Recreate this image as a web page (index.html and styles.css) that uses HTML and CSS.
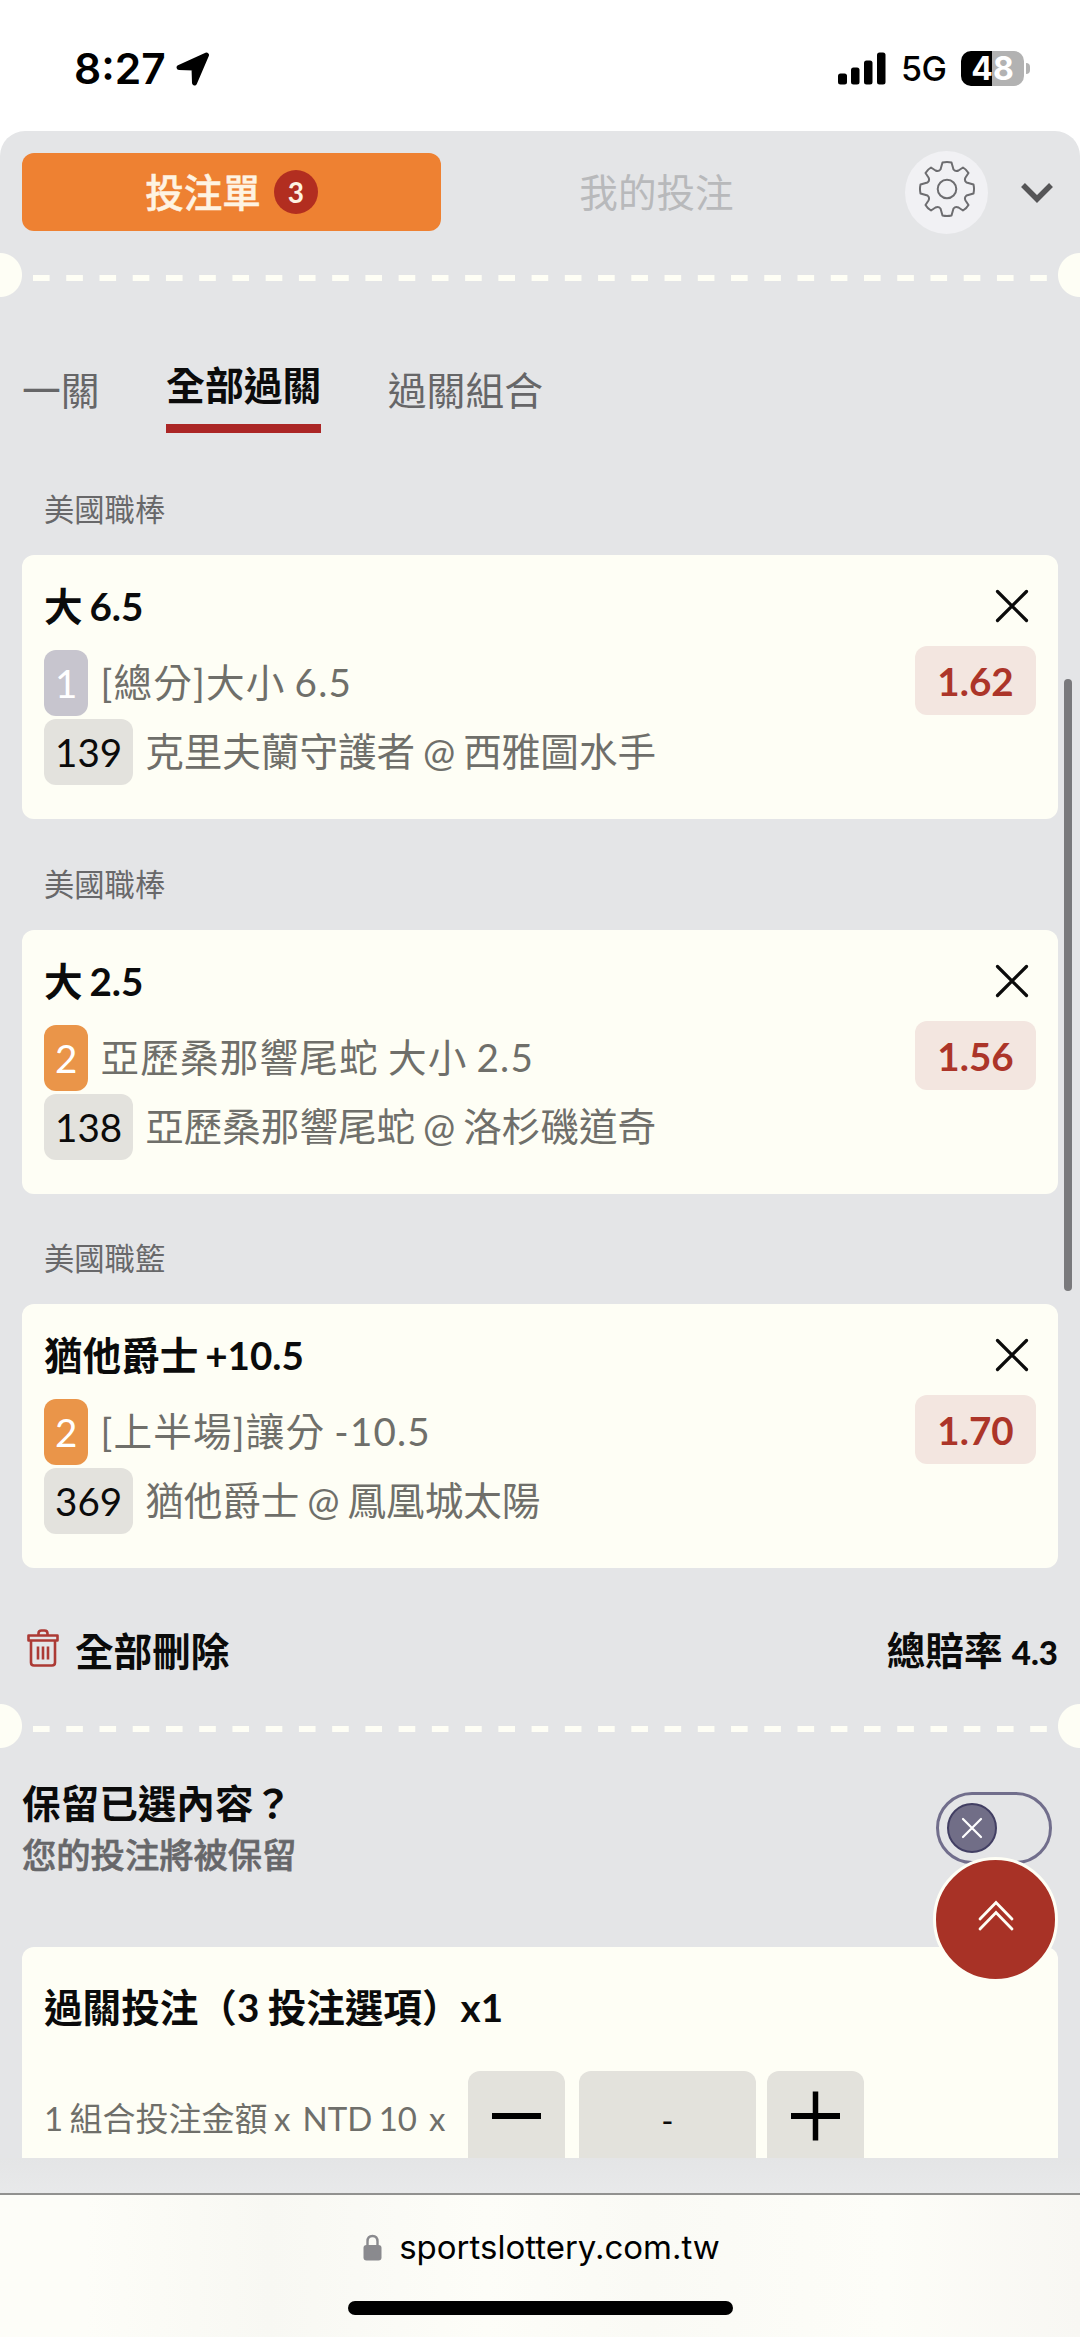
FILE: index.html
```html
<!DOCTYPE html>
<html lang="zh-Hant">
<head>
<meta charset="utf-8">
<title>投注單</title>
<link rel="stylesheet" href="styles.css">
</head>
<body>
<div class="status">
  <div class="status-left">
    <span class="clock">8:27</span>
    <svg class="location" width="34" height="34" viewBox="0 0 34 34"><path d="M30.500 3 L18.500 31 L18 16 L3 15.500 Z" fill="#000" stroke="#000" stroke-width="5" stroke-linejoin="round"/></svg>
  </div>
  <div class="status-right">
    <svg width="48" height="33" viewBox="0 0 48 33"><rect x="0" y="21.500" width="9" height="11" rx="2.500"/><rect x="13" y="15.500" width="8.500" height="17" rx="2.500"/><rect x="26" y="8.500" width="8.500" height="24" rx="2.500"/><rect x="39" y="0.500" width="8.500" height="32" rx="2.500"/></svg>
    <span class="network">5G</span>
    <span class="battery">48</span>
    <span class="battery-cap"></span>
  </div>
</div>

<main class="sheet">
  <header class="head">
    <div class="head-tab active">投注單<span class="count">3</span></div>
    <div class="head-tab">我的投注</div>
    <button class="gear" aria-label="設定">
      <svg width="56" height="56" viewBox="-28 -28 56 56" fill="none" stroke="#6d6d70" stroke-width="2" stroke-linejoin="round"><circle r="9.300"/><path d="M-4.500 -26.500 Q0 -27.500 4.500 -26.500 L6.500 -19.500 Q8.500 -17 11.500 -18.500 L16 -21.500 Q19.500 -19.500 21.500 -16 L18.500 -11.500 Q17 -8.500 19.500 -6.500 L26.500 -4.500 Q27.500 0 26.500 4.500 L19.500 6.500 Q17 8.500 18.500 11.500 L21.500 16 Q19.500 19.500 16 21.500 L11.500 18.500 Q8.500 17 6.500 19.500 L4.500 26.500 Q0 27.500 -4.500 26.500 L-6.500 19.500 Q-8.500 17 -11.500 18.500 L-16 21.500 Q-19.500 19.500 -21.500 16 L-18.500 11.500 Q-17 8.500 -19.500 6.500 L-26.500 4.500 Q-27.500 0 -26.500 -4.500 L-19.500 -6.500 Q-17 -8.500 -18.500 -11.500 L-21.500 -16 Q-19.500 -19.500 -16 -21.500 L-11.500 -18.500 Q-8.500 -17 -6.500 -19.500 Z"/></svg>
    </button>
    <svg class="collapse" width="34" height="22" viewBox="0 0 34 22" fill="none" stroke="#555557" stroke-width="5.500"><path d="M3 4 L17 18 L31 4"/></svg>
  </header>

  <div class="perforation"><svg width="1014" height="6" viewBox="0 0 1014 6"><path d="M0 3 H1014" stroke="#fefef5" stroke-width="6" stroke-dasharray="16.620 16.620"/></svg></div>

  <nav class="tabs">
    <span class="tab">一關</span>
    <span class="tab selected">全部過關</span>
    <span class="tab">過關組合</span>
  </nav>

  <h2 class="league">美國職棒</h2>
  <section class="bet">
    <div class="bet-info">
      <h3 class="pick">大 6.5</h3>
      <p class="line market"><span class="tag muted">1</span><span>[總分]大小 6.5</span></p>
      <p class="line"><span class="tag code">139</span><span>克里夫蘭守護者 @ 西雅圖水手</span></p>
    </div>
    <div class="bet-side">
      <svg class="remove" width="34" height="34" viewBox="0 0 34 34"><path d="M2.500 2.500 L31.500 31.500 M31.500 2.500 L2.500 31.500"/></svg>
      <span class="odds">1.62</span>
    </div>
  </section>

  <h2 class="league">美國職棒</h2>
  <section class="bet">
    <div class="bet-info">
      <h3 class="pick">大 2.5</h3>
      <p class="line market"><span class="tag hot">2</span><span>亞歷桑那響尾蛇 大小 2.5</span></p>
      <p class="line"><span class="tag code">138</span><span>亞歷桑那響尾蛇 @ 洛杉磯道奇</span></p>
    </div>
    <div class="bet-side">
      <svg class="remove" width="34" height="34" viewBox="0 0 34 34"><path d="M2.500 2.500 L31.500 31.500 M31.500 2.500 L2.500 31.500"/></svg>
      <span class="odds">1.56</span>
    </div>
  </section>

  <h2 class="league">美國職籃</h2>
  <section class="bet">
    <div class="bet-info">
      <h3 class="pick">猶他爵士 +10.5</h3>
      <p class="line market"><span class="tag hot">2</span><span>[上半場]讓分 -10.5</span></p>
      <p class="line"><span class="tag code">369</span><span>猶他爵士 @ 鳳凰城太陽</span></p>
    </div>
    <div class="bet-side">
      <svg class="remove" width="34" height="34" viewBox="0 0 34 34"><path d="M2.500 2.500 L31.500 31.500 M31.500 2.500 L2.500 31.500"/></svg>
      <span class="odds">1.70</span>
    </div>
  </section>

  <div class="summary">
    <svg class="trash" width="32" height="38" viewBox="0 0 32 38" fill="none" stroke="#ac3a35" stroke-width="2.600" stroke-linejoin="round"><path d="M11.500 6.500 V4.500 Q11.500 1.500 14.500 1.500 H17.500 Q20.500 1.500 20.500 4.500 V6.500 M1.500 6.500 H30.500 V11.500 H1.500 Z M4 11.500 V33.500 Q4 36.500 7 36.500 H25 Q28 36.500 28 33.500 V11.500"/><path d="M11 17.500 V30.500 M16 17.500 V30.500 M21 17.500 V30.500"/></svg>
    <span class="clear">全部刪除</span>
    <span class="total">總賠率 <b>4.3</b></span>
  </div>

  <div class="perforation"><svg width="1014" height="6" viewBox="0 0 1014 6"><path d="M0 3 H1014" stroke="#fefef5" stroke-width="6" stroke-dasharray="16.620 16.620"/></svg></div>

  <div class="keep">
    <div>
      <div class="keep-title">保留已選內容？</div>
      <div class="keep-note">您的投注將被保留</div>
    </div>
    <div class="toggle">
      <span class="knob"><svg width="22" height="22" viewBox="0 0 22 22" fill="none" stroke="#fff" stroke-width="2.200" stroke-linecap="round"><path d="M2 2 L20 20 M20 2 L2 20"/></svg></span>
    </div>
  </div>

  <section class="stake">
    <h3 class="stake-title">過關投注（3 投注選項）x1</h3>
    <div class="stake-row">
      <div class="stake-text"><span>1 組合投注金額 x</span><span>NTD 10</span><span>x</span></div>
      <button class="step" aria-label="減少"><svg width="49" height="50" viewBox="0 0 49 50"><path d="M0 25 H49" stroke="#000" stroke-width="6"/></svg></button>
      <div class="amount">-</div>
      <button class="step" aria-label="增加"><svg width="49" height="50" viewBox="0 0 49 50"><path d="M0 25 H49" stroke="#000" stroke-width="6"/><path d="M24.500 0.500 V49.500" stroke="#000" stroke-width="5.500"/></svg></button>
    </div>
  </section>

  <div class="scrollbar"></div>
  <button class="to-top" aria-label="回到頂端"><svg width="38" height="34" viewBox="0 0 38 34" fill="none" stroke="#fefef5" stroke-width="2.800" stroke-linecap="round"><path d="M3 20 L19 3.500 L35 20 M3 30 L19 13.500 L35 30"/></svg></button>
</main>

<footer class="browser">
  <div class="address">
    <svg width="19" height="27" viewBox="0 0 19 27"><path d="M4.500 12 V7.500 Q4.500 2 9.500 2 T14.500 7.500 V12" fill="none" stroke="#8a8a8e" stroke-width="2.400"/><rect x="0.500" y="11" width="18" height="15.500" rx="3" fill="#8a8a8e"/></svg>
    <span>sportslottery.com.tw</span>
  </div>
  <div class="home"></div>
</footer>
</body>
</html>
```
FILE: styles.css
```css
* { box-sizing: border-box; margin: 0; padding: 0; }
body {
  width: 1080px;
  height: 2337px;
  overflow: hidden;
  display: flex;
  flex-direction: column;
  background: #fff;
  color: #0b0b0b;
  font-family: Lato, "Noto Sans CJK TC", sans-serif;
  font-size: 38.6px;
}
button { border: 0; font: inherit; color: inherit; }
svg { display: block; flex: none; }

.status {
  flex: none;
  height: 131px;
  padding: 6px 50px 0 74px;
  display: flex;
  align-items: center;
  justify-content: space-between;
  font-family: Inter, sans-serif;
  color: #000;
}
.status-left, .status-right { display: flex; align-items: center; }
.clock { font-size: 42.5px; font-weight: 600; width: 102px; }
.network { font-size: 34px; font-weight: 500; margin-left: 15px; width: 60px; letter-spacing: -0.5px; }
.battery {
  width: 63px;
  height: 35px;
  border-radius: 10px;
  background: linear-gradient(90deg, #000 31px, #b2b2b2 31px);
  color: #fff;
  font-size: 32px;
  font-weight: 700;
  line-height: 35px;
  text-align: center;
}
.battery-cap { width: 4px; height: 11px; margin-left: 2px; border-radius: 0 5px 5px 0; background: #b2b2b2; }

.sheet {
  position: relative;
  flex: none;
  height: 2062px;
  overflow: hidden;
  padding: 22px 22px 0;
  background: #e4e5e7;
  border-radius: 25px 25px 0 0;
}
.sheet::after {
  content: "";
  position: absolute;
  left: 0;
  right: 0;
  bottom: 0;
  height: 35px;
  background: linear-gradient(#e4e5e6, #e8e9ea);
}
.head { display: flex; align-items: center; height: 78px; }
.head-tab {
  width: 419px;
  height: 78px;
  display: flex;
  align-items: center;
  justify-content: center;
  color: #b8b9bb;
  line-height: 70px;
}
.head-tab.active { background: #ee8132; color: #fef3e2; border-radius: 12px; font-weight: 500; -webkit-text-stroke: 0.5px; }
.count {
  width: 44px;
  height: 44px;
  margin-left: 13px;
  border-radius: 50%;
  background: #b22e20;
  font-size: 28px;
  font-weight: 700;
  line-height: 44px;
  text-align: center;
  -webkit-text-stroke: 0;
}
.head-tab:not(.active) { width: 431px; }
.gear {
  width: 83px;
  height: 83px;
  margin-left: 33px;
  border-radius: 50%;
  background: #f1f1f4;
  display: flex;
  justify-content: center;
  padding-top: 10px;
}
.collapse { margin-left: 32px; }

.perforation {
  height: 44px;
  margin: 22px -22px 0;
  display: flex;
  align-items: center;
  justify-content: center;
  padding-top: 6px;
  background:
    radial-gradient(circle at 0 50%, #fefef5 21.500px, transparent 22.500px),
    radial-gradient(circle at 100% 50%, #fefef5 21.500px, transparent 22.500px);
}

.tabs { display: flex; gap: 66.500px; margin-top: 61px; height: 75px; }
.tab { font-size: 38.8px; line-height: 56px; padding-top: 4px; color: #666668; }
.tab.selected { padding-top: 0; line-height: 54px; color: #0b0b0b; font-weight: 700; border-bottom: 9px solid #ab2626; }

.league {
  height: 122px;
  padding: 52px 22px 0;
  font-size: 30.3px;
  line-height: 48px;
  font-weight: 400;
  color: #68686a;
}
.bet {
  height: 264px;
  display: flex;
  justify-content: space-between;
  padding: 26px 22px 0;
  border-radius: 12px;
  background: #fefef5;
}
.bet + .league { height: 110.500px; padding-top: 40.500px; }
.pick { font-size: 38.6px; font-weight: 700; line-height: 50px; margin-bottom: 19px; word-spacing: -2.500px; }
.line { display: flex; gap: 12px; height: 66px; line-height: 65px; margin-bottom: 3px; color: #6f6f6a; word-spacing: -2px; }
.market span:last-child { letter-spacing: 1.200px; }
.tag { height: 66px; padding: 0 11px; border-radius: 12px; line-height: 66px; }
.muted { background: #c7c5ce; color: #fff; }
.hot { background: #ea9549; color: #fff; }
.code { background: #e3e2dd; color: #0b0b0b; }
.bet-side { display: flex; flex-direction: column; align-items: flex-end; }
.remove { margin: 8px 7px 23px 0; fill: none; stroke: #0b0b0b; stroke-width: 3.200; stroke-linecap: round; }
.odds {
  width: 121px;
  height: 69px;
  border-radius: 12px;
  background: #f3e6e0;
  color: #ac3529;
  font-weight: 700;
  line-height: 70px;
  text-align: center;
}

.summary { display: flex; align-items: center; height: 114px; padding: 0 0 0 5px; margin-top: 26px; margin-bottom: -26px; font-weight: 700; line-height: 56px; }
.trash { margin-top: -7px; margin-right: 16px; }
.total { margin-left: auto; }
.total b { font-size: 33px; }

.keep { display: flex; justify-content: space-between; height: 199px; padding: 27px 6px 0 0; }
.keep-title { font-weight: 700; line-height: 56px; }
.keep-note { font-size: 34.3px; font-weight: 500; line-height: 48px; color: #67676a; -webkit-text-stroke: 0.6px; }
.toggle { width: 116px; height: 72px; margin-top: 17px; padding: 8px; border: 3px solid #716e8c; border-radius: 36px; }
.knob {
  width: 50px;
  height: 50px;
  border: 2.500px solid #423f63;
  border-radius: 50%;
  background: #716e87;
  display: flex;
  align-items: center;
  justify-content: center;
}

.stake { height: 260px; padding: 32px 22px 0; border-radius: 12px; background: #fefef5; }
.stake-title { font-size: 38.6px; font-weight: 700; line-height: 56px; word-spacing: -1px; }
.stake-row { display: flex; margin-top: 36px; height: 98px; }
.stake-text { display: flex; gap: 12px; width: 424px; font-size: 33px; line-height: 94px; color: #6f6f6a; white-space: nowrap; word-spacing: -2px; }
.step, .amount { height: 120px; border-radius: 12px; background: #e3e2dc; }
.step { width: 97px; display: flex; justify-content: center; padding-top: 20px; }
.amount { width: 177px; margin: 0 11px 0 14px; text-align: center; font-size: 33px; line-height: 98px; }

.scrollbar { position: absolute; left: 1064px; top: 548px; width: 8px; height: 612px; border-radius: 5px; background: #79797c; }
.to-top {
  position: absolute;
  left: 933px;
  top: 1726px;
  width: 125px;
  height: 125px;
  border: 3px solid #fefef5;
  border-radius: 50%;
  background: #a83226;
  display: flex;
  justify-content: center;
  padding-top: 39px;
}

.browser {
  flex: 1;
  border-top: 2px solid #91918f;
  background: linear-gradient(90deg, #fdfdf8 8%, #f8f8f3 25%, #fdfdf8 45%, #fafaf5 60%, #fdfdf8 82%, #f8f7f3);
  padding-top: 29px;
}
.address {
  display: flex;
  align-items: center;
  justify-content: center;
  gap: 17px;
  height: 46px;
  font-family: Inter, sans-serif;
  font-size: 33px;
  color: #000;
  padding-left: 3px;
}
.home { width: 385px; height: 14px; margin: 31px auto 0; border-radius: 7px; background: #000; }
```
